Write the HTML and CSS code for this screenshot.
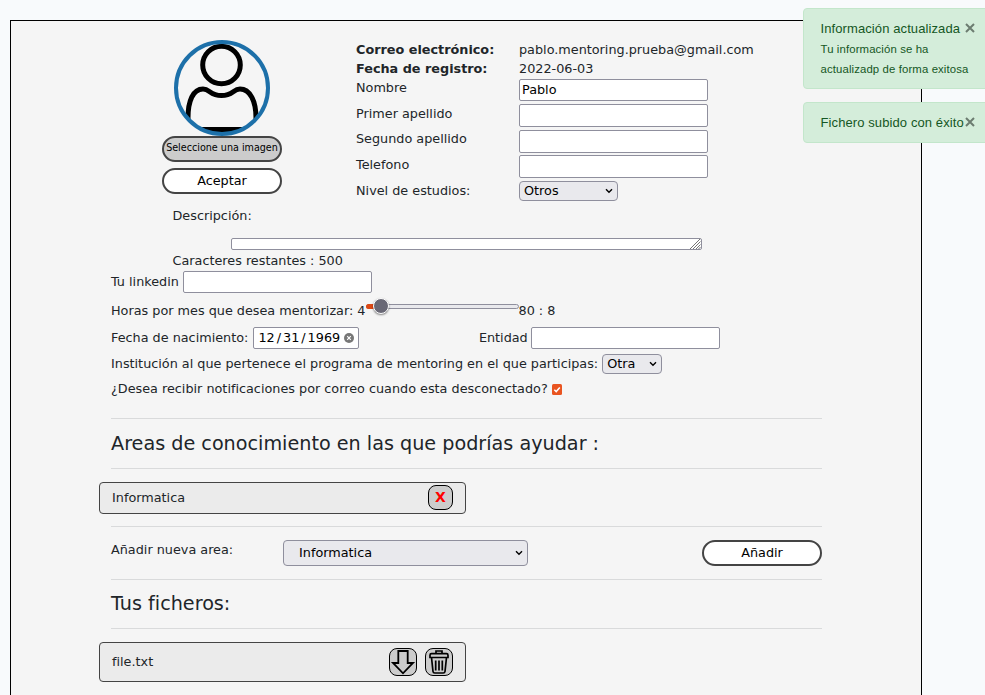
FILE: index.html
```html
<!DOCTYPE html>
<html lang="es">
<head>
<meta charset="utf-8">
<title>Perfil</title>
<link rel="stylesheet" href="styles.css">
</head>
<body>
<main class="panel">
  <section class="profile">
    <div class="photo">
      <svg class="avatar" viewBox="0 0 96 96">
        <defs><clipPath id="round"><circle cx="48" cy="48" r="46"/></clipPath></defs>
        <g clip-path="url(#round)" fill="none" stroke="#000" stroke-width="5">
          <circle cx="47.500" cy="25" r="18.800"/>
          <path d="M14 88V78C14 61 19 49 29 49C36 49 36 55.500 47.500 55.500C59 55.500 59 49 66 49C76 49 82 61 82 78V88"/>
          <path d="M10 89.500H86"/>
        </g>
        <circle cx="48" cy="48" r="46" fill="none" stroke="#1d70a9" stroke-width="4"/>
      </svg>
      <button class="pill pick">Seleccione una imagen</button>
      <button class="pill accept">Aceptar</button>
    </div>
    <div class="fields">
      <b>Correo electrónico:</b><span>pablo.mentoring.prueba@gmail.com</span>
      <b>Fecha de registro:</b><span>2022-06-03</span>
      <label>Nombre</label><input class="text first" value="Pablo">
      <label>Primer apellido</label><input class="text">
      <label>Segundo apellido</label><input class="text low">
      <label>Telefono</label><input class="text">
      <label>Nivel de estudios:</label>
      <div class="select level"><span>Otros</span><svg viewBox="0 0 8 6"><path d="M1 1.300L4 4.300L7 1.300"/></svg></div>
    </div>
  </section>

  <section class="about">
    <div class="about-title">Descripción:</div>
    <div class="area"><svg viewBox="0 0 12 10"><path d="M1 10L11 0M4 10L11.500 2.500M7 10L11.500 5.500M9.500 10L11.500 8"/></svg></div>
    <div>Caracteres restantes : 500</div>
  </section>

  <div class="row linkedin"><label>Tu linkedin</label><input class="text"></div>
  <div class="row hours">
    <span>Horas por mes que desea mentorizar: 4</span>
    <div class="slider"><i class="fill"></i><i class="thumb"></i></div>
    <span>80 : 8</span>
  </div>
  <div class="row birth">
    <label>Fecha de nacimiento:</label>
    <div class="date"><span>12</span><span>/</span><span>31</span><span>/</span><span>1969</span>
      <svg viewBox="0 0 10 10"><circle cx="5" cy="5" r="5" fill="#777"/><path d="M3.200 3.200L6.800 6.800M6.800 3.200L3.200 6.800" stroke="#fff" stroke-width="1.200"/></svg>
    </div>
    <label class="entity">Entidad</label><input class="text">
  </div>
  <div class="row institution">
    <label>Institución al que pertenece el programa de mentoring en el que participas:</label>
    <div class="select other"><span>Otra</span><svg viewBox="0 0 8 6"><path d="M1 1.300L4 4.300L7 1.300"/></svg></div>
  </div>
  <div class="row notify">
    <label>¿Desea recibir notificaciones por correo cuando esta desconectado?</label>
    <svg class="check" viewBox="0 0 10 11"><rect width="10" height="11" rx="1.500" fill="#e95420"/><path d="M2.300 5.700L4.200 7.600L7.800 3.400" fill="none" stroke="#fff" stroke-width="1.500"/></svg>
  </div>

  <h2 class="ruled">Areas de conocimiento en las que podrías ayudar :</h2>
  <div class="item">
    <span>Informatica</span>
    <button class="tool remove">X</button>
  </div>
  <div class="add">
    <label>Añadir nueva area:</label>
    <div class="select topic"><span>Informatica</span><svg viewBox="0 0 8 6"><path d="M1 1.300L4 4.300L7 1.300"/></svg></div>
    <button class="pill">Añadir</button>
  </div>
  <h2 class="ruled files">Tus ficheros:</h2>
  <div class="item file">
    <span>file.txt</span>
    <button class="tool"><svg viewBox="0 0 28 28" fill="none" stroke="#000" stroke-width="1.800"><path d="M9.300 3H18.700V15H24L14 25.300L4 15H9.300Z"/></svg></button>
    <button class="tool"><svg viewBox="0 0 28 28" fill="none" stroke="#000" stroke-width="1.700"><path d="M11 5.500V3H17V5.500M6.500 5.700H21.500Q23 5.700 23 7.200V9.500H5V7.200Q5 5.700 6.500 5.700ZM6.500 9.500L8 23.500Q8.200 25 9.700 25H18.300Q19.800 25 20 23.500L21.500 9.500M10.700 12.500V22.500M14 12.500V22.500M17.300 12.500V22.500"/></svg></button>
  </div>
</main>

<aside class="toasts">
  <div class="toast tall">
    <div class="toast-title">Información actualizada</div>
    <div class="toast-body">Tu información se ha<br>actualizadp de forma exitosa</div>
    <svg class="close" viewBox="0 0 10 10"><path d="M1 1L9 9M9 1L1 9"/></svg>
  </div>
  <div class="toast">
    <div class="toast-title">Fichero subido con éxito</div>
    <svg class="close" viewBox="0 0 10 10"><path d="M1 1L9 9M9 1L1 9"/></svg>
  </div>
</aside>
</body>
</html>
```
FILE: styles.css
```css
* { box-sizing: border-box; }
html, body { height: 100%; }
body {
  margin: 0;
  padding: 20px 0 0 10px;
  overflow: hidden;
  background: #f8fafc;
  color: #212529;
  font: 12.8px/19px "DejaVu Sans", sans-serif;
}
button, input { font: inherit; color: #000; }
.panel {
  width: 912px;
  height: 675px;
  padding: 19px 99px 0 100px;
  border: 1px solid #000;
  border-bottom: 0;
  background: #f5f5f5;
}
.profile { display: flex; gap: 74px; height: 166px; padding-left: 51px; }
.photo { display: flex; flex-direction: column; align-items: center; width: 120px; }
.avatar { display: block; width: 96px; height: 96px; flex: none; }
.pill {
  display: block;
  width: 120px;
  height: 26px;
  padding: 0;
  border: 2px solid #444;
  border-radius: 13px;
  background: #fff;
  line-height: 20px;
  text-align: center;
  white-space: nowrap;
}
.pick { background: #ccc; font-size: 9.6px; line-height: 18px; padding-bottom: 3px; }
.accept { margin-top: 6px; }
.fields {
  display: grid;
  grid-template-columns: 163px 240px;
  grid-template-rows: 19px 19px 26px 25px 26px 26px 20px;
  align-items: start;
}
.text {
  width: 189px;
  height: 23px;
  padding: 0 2px;
  border: 1px solid #8f8f9d;
  border-radius: 2px;
  background: #fff;
}
.first { height: 22px; margin-top: 1px; padding-bottom: 1px; }
.low { margin-top: 1px; }
.select {
  display: flex;
  align-items: center;
  justify-content: space-between;
  height: 20px;
  padding: 0 4px;
  border: 1px solid #8f8f9d;
  border-radius: 4px;
  background: #e9e9ed;
  color: #000;
}
.select span { padding-bottom: 2px; }
.select svg { width: 8px; height: 6px; fill: none; stroke: #000; stroke-width: 1.4; }
.level { width: 99px; }
.about { height: 65px; padding-left: 61.5px; }
.area {
  display: flex;
  justify-content: flex-end;
  width: 471px;
  height: 12px;
  margin: 13px 0 1px 58.5px;
  border: 1px solid #8f8f9d;
  border-radius: 2px;
  background: #fff;
}
.area svg { width: 12px; height: 10px; fill: none; stroke: #666; stroke-width: .9; }
.row { display: flex; align-items: center; white-space: nowrap; }
.row > label, .row > span { padding-bottom: 2px; }
.linkedin { height: 22px; gap: 4px; }
.linkedin .text, .birth .text { height: 22px; }
.hours { height: 34px; padding-top: 2px; }
.slider {
  position: relative;
  width: 153px;
  height: 5px;
  margin-top: -10px;
  border: 1px solid #8f8f9d;
  border-radius: 3px;
  background: #e9e9ed;
}
.fill { position: absolute; left: -1px; top: -1px; width: 14px; height: 5px; border-radius: 3px; background: #dd4814; }
.thumb {
  position: absolute;
  left: 6px;
  top: -7px;
  width: 16px;
  height: 16px;
  border: 1px solid #fff;
  border-radius: 50%;
  background: #696875;
  box-shadow: 0 1px 2px #0007;
}
.birth { height: 22px; }
.date {
  display: flex;
  align-items: center;
  gap: 2px;
  width: 106px;
  height: 22px;
  margin-left: 5px;
  padding: 0 4px;
  border: 1px solid #8f8f9d;
  border-radius: 2px;
  background: #fff;
  color: #000;
}
.date span { padding-bottom: 2px; }
.date svg { width: 10px; height: 10px; margin-left: auto; }
.entity { width: 52.5px; margin-left: 119.5px; }
.institution { height: 30px; gap: 4px; }
.other { width: 60px; }
.notify { height: 20px; gap: 4px; }
.check { width: 10px; height: 11px; }
.ruled {
  height: 51px;
  margin: 19px 0 0;
  border: solid #d9dadb;
  border-width: 1px 0;
  font-size: 19.2px;
  font-weight: 400;
  line-height: 49px;
}
.item {
  display: flex;
  align-items: center;
  gap: 8px;
  width: 367px;
  height: 32px;
  margin: 13px 0 12px -12px;
  padding: 0 12px;
  border: 1px solid #444;
  border-radius: 4px;
  background: #ebebeb;
}
.item span { flex: 1; padding-bottom: 2px; }
.tool {
  width: 28px;
  height: 28px;
  padding: 0;
  border: 1px solid #000;
  border-radius: 8px;
  background: #ccc;
}
.tool svg { display: block; width: 28px; height: 28px; margin: -1px; }
.remove { width: 25px; height: 25px; margin-bottom: 1px; color: red; font-size: 14px; font-weight: 700; line-height: 23px; }
.add {
  display: flex;
  align-items: center;
  height: 53px;
  border-top: 1px solid #d9dadb;
}
.add label { width: 172px; margin-top: -7px; }
.topic { width: 245px; height: 26px; padding-left: 15px; }
.add .pill { margin-left: auto; }
.files { height: 50px; margin: 0; line-height: 47px; }
.file { height: 40px; margin-bottom: 0; }
.toasts {
  position: absolute;
  top: 8px;
  left: 803px;
  width: 182px;
  overflow: hidden;
  color: #155724;
  font-family: "Liberation Sans", sans-serif;
}
.toast {
  position: relative;
  width: 200px;
  height: 41px;
  margin-bottom: 13px;
  padding: 10px 0 0 16.5px;
  border: 1px solid #c3e6cb;
  border-radius: 4px;
  background: #d4edda;
}
.tall { height: 81px; }
.toast-title { font-size: 13px; line-height: 20px; letter-spacing: .1px; }
.toast-body { font-size: 11.375px; line-height: 20px; letter-spacing: .12px; }
.close { position: absolute; left: 161px; top: 14px; width: 10px; height: 10px; fill: none; stroke: #6c7c70; stroke-width: 2; }
```
